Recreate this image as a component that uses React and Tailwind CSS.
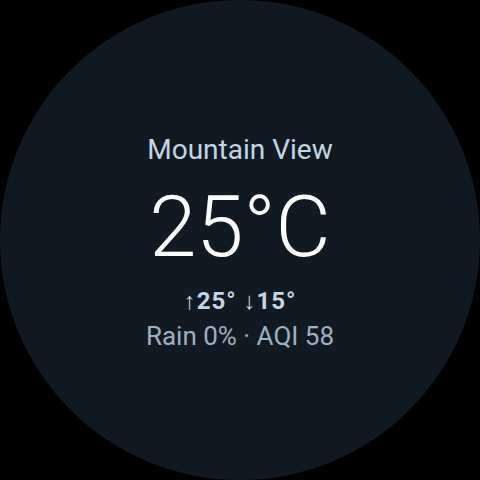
export default function App() {
  return (
    <div className="w-[480px] h-[480px] bg-black flex items-center justify-center" style={{fontFamily: 'Roboto, sans-serif'}}>
      <div className="w-[480px] h-[480px] rounded-full bg-[#111a22] flex flex-col items-center justify-center">
        <div className="text-[28px] leading-none text-[#c5d5e4] mt-[4px]">Mountain View</div>
        <div className="text-[85px] font-light leading-none text-white mt-[21px]">25°C</div>
        <div className="text-[24px] font-bold leading-none text-[#c5d5e4] mt-[19px] tracking-[1px]">↑25° ↓15°</div>
        <div className="text-[26px] leading-none text-[#9fb0c0] mt-[10px]">Rain 0% · AQI 58</div>
      </div>
    </div>
  );
}
